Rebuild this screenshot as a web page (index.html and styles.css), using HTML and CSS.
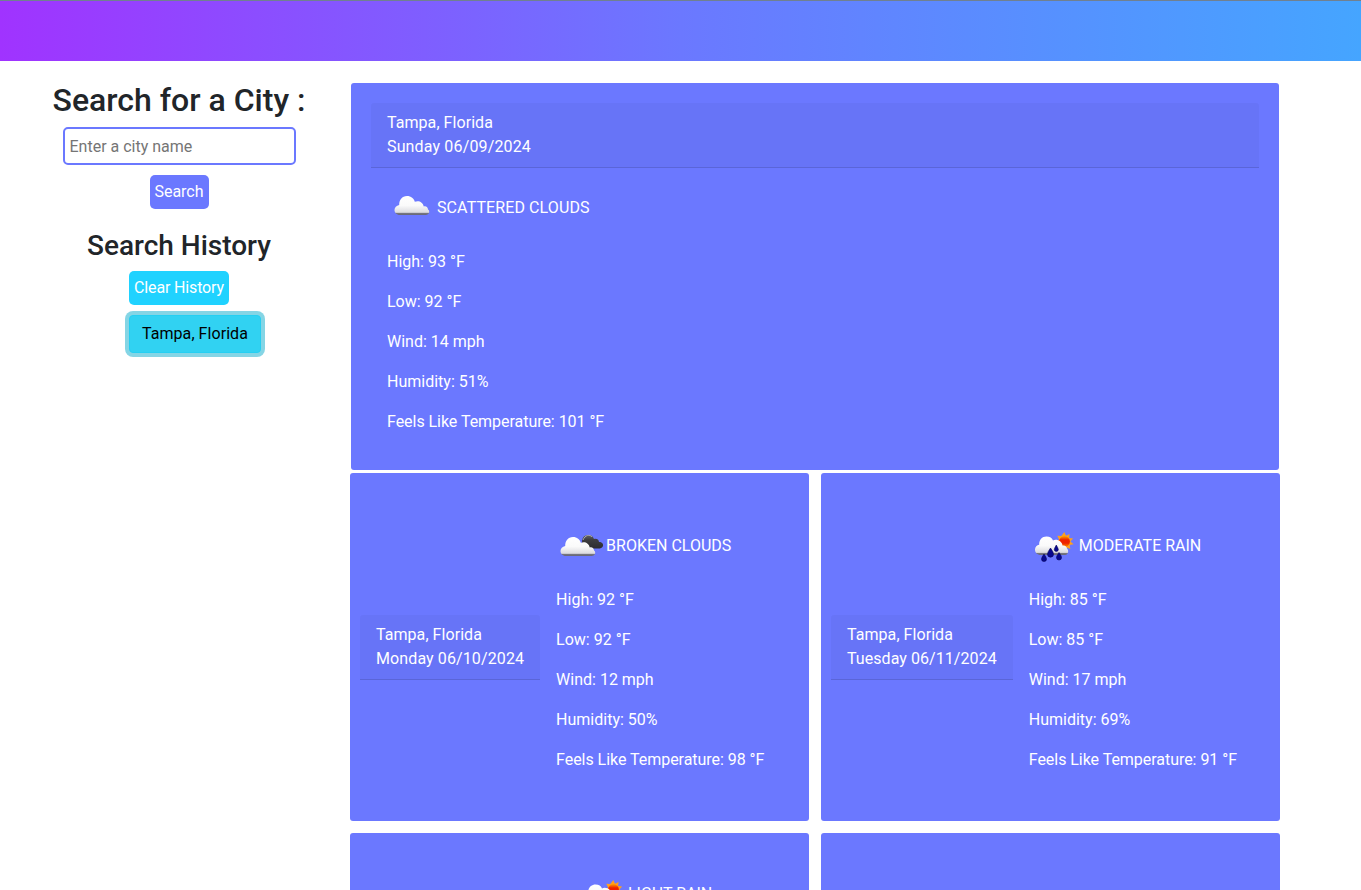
FILE: index.html
```html
<!DOCTYPE html>
<html lang="en">
<head>
<meta charset="utf-8">
<title>Weather Forecast</title>
<link rel="stylesheet" href="styles.css">
</head>
<body>
<svg class="defs" width="0" height="0" aria-hidden="true">
  <defs>
    <linearGradient id="white" x1="0" y1="0" x2="0" y2="1">
      <stop offset="0" stop-color="#fff"/><stop offset=".5" stop-color="#fafafa"/><stop offset=".86" stop-color="#dcdce0"/><stop offset=".91" stop-color="#777781"/><stop offset="1" stop-color="#666675"/>
    </linearGradient>
    <linearGradient id="dark" x1="0" y1="0" x2="0" y2="1">
      <stop offset="0" stop-color="#66666c"/><stop offset=".35" stop-color="#3d3d40"/><stop offset="1" stop-color="#2c2c31"/>
    </linearGradient>
    <linearGradient id="heat" x1="0" y1="0" x2="0" y2="1">
      <stop offset="0" stop-color="#ffa000"/><stop offset=".35" stop-color="#ee2200"/><stop offset=".65" stop-color="#ee2200"/><stop offset="1" stop-color="#ff8b00"/>
    </linearGradient>
    <path id="cloud" d="M13 31C9.500 31 7.500 28.500 7.500 26C7.500 23.500 9.500 21.500 12.200 21C12 16 15 12 20 12C24 12 27 14.500 27.800 17.800C31.500 16 36 18 36.800 22.500C39 21.800 41 23.300 41 25.500C43 26.500 42.800 31 38.500 31Z"/>
    <g id="rain">
      <path fill="#ffa01c" d="M35.300 10l1.700 3.700 3.600-1.800-.5 4 4 .5-2.700 3 3.200 2.800-4 .8.8 3.900-3.700-1.500-2.400 3.100-2-3.500-4 .8 1-4-3.500-2 3.300-2.400-1.800-3.700 4 .2z"/>
      <circle cx="35.500" cy="19.500" r="5.400" fill="url(#heat)"/>
      <path fill="url(#white)" d="M12 33C8 33 6 30.500 6 27.500C6 25 8 23 10.200 22.700C10 18 13 14.500 17.500 14.500C21 14.500 23 16 24 18.500C27.500 16.500 33 19 33.500 23.500C36 23 38 24.500 38 26.500C40 28 39.500 33 36 33Z"/>
      <g fill="#08088e" stroke="#05055d" stroke-width=".6">
        <path d="M21.500 26q3 4 3 6.200a3 3 0 0 1-6 0q0-2 3-6.200z"/>
        <path d="M27.300 23q2 3.500 2 4.500a2 2 0 0 1-4 0q0-1 2-4.500z"/>
        <path d="M15 32q2.500 3.500 2.500 5a2.500 2.500 0 0 1-5 0q0-1.500 2.500-5z"/>
        <path d="M30 30.500q2.500 3.500 2.500 5a2.500 2.500 0 0 1-5 0q0-1.500 2.500-5z"/>
      </g>
    </g>
  </defs>
</svg>
<header class="topbar"></header>
<div class="layout">
  <aside class="sidebar">
    <h2>Search for a City :</h2>
    <input class="city-input" type="text" placeholder="Enter a city name">
    <button class="btn search">Search</button>
    <h3>Search History</h3>
    <div class="history">
      <button class="btn clear">Clear History</button>
      <button class="recent">Tampa, Florida</button>
    </div>
  </aside>
  <main class="forecast">
    <section class="card today">
      <div class="card-header"><div>Tampa, Florida</div><div class="date sunday">Sunday 06/09/2024</div></div>
      <div class="card-body">
        <p class="condition scattered"><svg width="50" height="50"><use href="#cloud" fill="url(#white)"/></svg><span>SCATTERED CLOUDS</span></p>
        <p>High: 93 °F</p><p>Low: 92 °F</p><p>Wind: 14 mph</p><p>Humidity: 51%</p><p class="feels">Feels Like Temperature: 101 °F</p>
      </div>
    </section>
    <div class="days">
      <section class="card day">
        <div class="card-header"><div>Tampa, Florida</div><div class="date monday">Monday 06/10/2024</div></div>
        <div class="card-body">
          <p class="condition"><svg width="50" height="50"><path fill="url(#dark)" d="M26 20C26 15 29 12.500 33 13C36 13 37 15 38 17C41 16 43 18 43 20C46 20 47.500 22 47 24C46 27 43 26.500 40 26.500H30C27 26 25 23 26 20Z"/><path fill="none" stroke="#a9a9b0" d="M27 18C29 13 34 12 36 15"/><use href="#cloud" x="-3" y="3" fill="url(#white)"/></svg><span>BROKEN CLOUDS</span></p>
          <p>High: 92 °F</p><p>Low: 92 °F</p><p>Wind: 12 mph</p><p>Humidity: 50%</p><p class="feels">Feels Like Temperature: 98 °F</p>
        </div>
      </section>
      <section class="card day">
        <div class="card-header"><div>Tampa, Florida</div><div class="date tuesday">Tuesday 06/11/2024</div></div>
        <div class="card-body">
          <p class="condition"><svg width="50" height="50"><use href="#rain"/></svg><span>MODERATE RAIN</span></p>
          <p>High: 85 °F</p><p>Low: 85 °F</p><p>Wind: 17 mph</p><p>Humidity: 69%</p><p class="feels">Feels Like Temperature: 91 °F</p>
        </div>
      </section>
      <section class="card day">
        <div class="card-header"><div>Tampa, Florida</div><div class="date wednesday">Wednesday 06/12/2024</div></div>
        <div class="card-body">
          <p class="condition"><svg width="50" height="50"><use href="#rain"/></svg><span>LIGHT RAIN</span></p>
          <p>High: 86 °F</p><p>Low: 86 °F</p><p>Wind: 15 mph</p><p>Humidity: 66%</p><p class="feels">Feels Like Temperature:<br>93 °F</p>
        </div>
      </section>
      <section class="card day">
        <div class="card-header"><div>Tampa, Florida</div><div class="date">Thursday 06/13/2024</div></div>
        <div class="card-body">
          <p class="condition"><svg width="50" height="50"><use href="#rain"/></svg><span>LIGHT RAIN</span></p>
          <p>High: 85 °F</p><p>Low: 85 °F</p><p>Wind: 13 mph</p><p>Humidity: 70%</p><p class="feels">Feels Like Temperature: 92 °F</p>
        </div>
      </section>
    </div>
  </main>
</div>
</body>
</html>
```
FILE: styles.css
```css
* { box-sizing: border-box; }
html, body { height: 100%; }
body {
  margin: 0;
  overflow: hidden;
  background: #fff;
  color: #212529;
  font: 400 16px/24px Roboto, sans-serif;
}
.defs { position: absolute; }
.topbar {
  height: 61px;
  border-top: 1px solid #708090;
  background: linear-gradient(to right, #a033ff, #6b78ff, #45a5ff);
}
.layout { display: flex; height: calc(100% - 61px); overflow: hidden; }
.sidebar {
  width: 342px;
  flex: none;
  margin-right: 8px;
  padding: 20px 0 0 16px;
  display: flex;
  flex-direction: column;
  align-items: center;
}
h2, h3 { margin: 0; font-weight: 500; line-height: 1.2; white-space: nowrap; }
h2 { font-size: 32px; margin-bottom: 8px; }
h3 { font-size: 28px; margin: 20px 0 8px; }
input, button { font: inherit; }
.city-input {
  width: 233px;
  height: 38px;
  padding: 0 5px;
  border: 2px solid #6b78ff;
  border-radius: 5px;
  color: #212529;
}
.city-input::placeholder { color: #757575; }
.btn {
  height: 34px;
  padding: 5px;
  border: 0;
  border-radius: 5px;
  color: #fff;
}
.search { width: 59px; margin-top: 10px; background: #6b78ff; letter-spacing: -.05px; }
.history { width: 100px; display: flex; flex-direction: column; align-items: flex-start; gap: 10px; }
.clear { width: 100px; background: #20d2ff; white-space: nowrap; letter-spacing: -.15px; }
.recent {
  height: 38px;
  padding: 6px 12px;
  border: 1px solid #25cff2;
  border-radius: 4px;
  background: #31d2f2;
  color: #000;
  letter-spacing: .06px;
  box-shadow: 0 0 0 4px rgba(11, 172, 204, .5);
  white-space: nowrap;
}
.forecast { width: 930px; flex: none; padding-top: 22px; }
.card { background: #6b78ff; border-radius: 3px; color: #fff; }
.today { margin: 0 1px 3px; padding: 20px; }
.card-header {
  padding: 8px 16px;
  background: rgba(0, 0, 0, .03);
  border-bottom: 1px solid rgba(0, 0, 0, .125);
  border-radius: 3px 3px 0 0;
  letter-spacing: .06px;
  white-space: nowrap;
}
.sunday { letter-spacing: .15px; }
.monday { letter-spacing: .11px; }
.wednesday { letter-spacing: -.07px; }
.card-body { padding: 16px; }
.card-body p { margin: 0 0 16px; white-space: nowrap; }
.card-body p:last-child { margin-bottom: 0; }
.feels { letter-spacing: -.04px; }
.condition { display: flex; align-items: center; height: 50px; }
.condition span { padding-bottom: 2px; }
.scattered { letter-spacing: .1px; }
.days { display: grid; grid-template-columns: 459px 459px; gap: 12px; }
.day { height: 348px; padding: 10px; display: flex; align-items: center; }
```
